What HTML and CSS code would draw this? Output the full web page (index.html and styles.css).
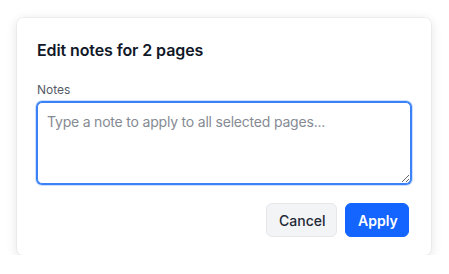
FILE: index.html
```html
<!DOCTYPE html>
<html>
<head>
  <link rel="stylesheet" href="styles.css">
</head>
<body>
  <div class="dialog">
    <h2 class="dialog-title">Edit notes for 2 pages</h2>
    <label class="field-label" for="notes">Notes</label>
    <textarea id="notes" class="notes-input" placeholder="Type a note to apply to all selected pages..."></textarea>
    <div class="dialog-actions">
      <button class="btn btn-secondary">Cancel</button>
      <button class="btn btn-primary">Apply</button>
    </div>
  </div>
</body>
</html>
```

FILE: styles.css
```css
body {
  margin: 0;
  background: #fff;
  font-family: Inter, "Liberation Sans", sans-serif;
}
.dialog {
  box-sizing: border-box;
  width: 414px;
  height: 237px;
  margin: 18px 0 0 17px;
  padding: 20px 21px 18px 20px;
  background: #fff;
  border-radius: 6px;
  box-shadow: 0 0 0 1px rgba(0, 0, 0, 0.03), 0 2px 12px rgba(0, 0, 0, 0.12);
  display: flex;
  flex-direction: column;
}
.dialog-title {
  margin: 0;
  font-size: 16px;
  line-height: 24px;
  font-weight: 600;
  color: #111827;
  letter-spacing: -0.1px;
}
.field-label {
  margin-top: 20px;
  font-size: 12px;
  line-height: 16px;
  color: #555b66;
}
.notes-input {
  box-sizing: border-box;
  margin-top: 4px;
  width: 374px;
  height: 82px;
  padding: 9px 9px;
  border: 1px solid #3b82f6;
  border-radius: 5px;
  box-shadow: 0 0 0 1px #3b82f6, 0 0 0 2px rgba(59, 130, 246, 0.25);
  outline: none;
  font-family: inherit;
  font-size: 14px;
  line-height: 20px;
  letter-spacing: -0.2px;
  color: #111827;
  resize: vertical;
}
.notes-input::placeholder {
  color: #858a93;
}
.dialog-actions {
  margin-top: 19px;
  margin-right: 1px;
  display: flex;
  justify-content: flex-end;
  gap: 8px;
}
.btn {
  height: 34px;
  padding: 0 12px;
  border-radius: 6px;
  font-family: inherit;
  font-size: 14px;
  font-weight: 500;
  cursor: pointer;
}
.btn-secondary {
  width: 71px;
  background: #f3f4f6;
  border: 1px solid #e5e7eb;
  color: #1f2937;
}
.btn-primary {
  width: 64px;
  background: #1464ff;
  border: 1px solid #1464ff;
  color: #fff;
  font-weight: 600;
}
```
